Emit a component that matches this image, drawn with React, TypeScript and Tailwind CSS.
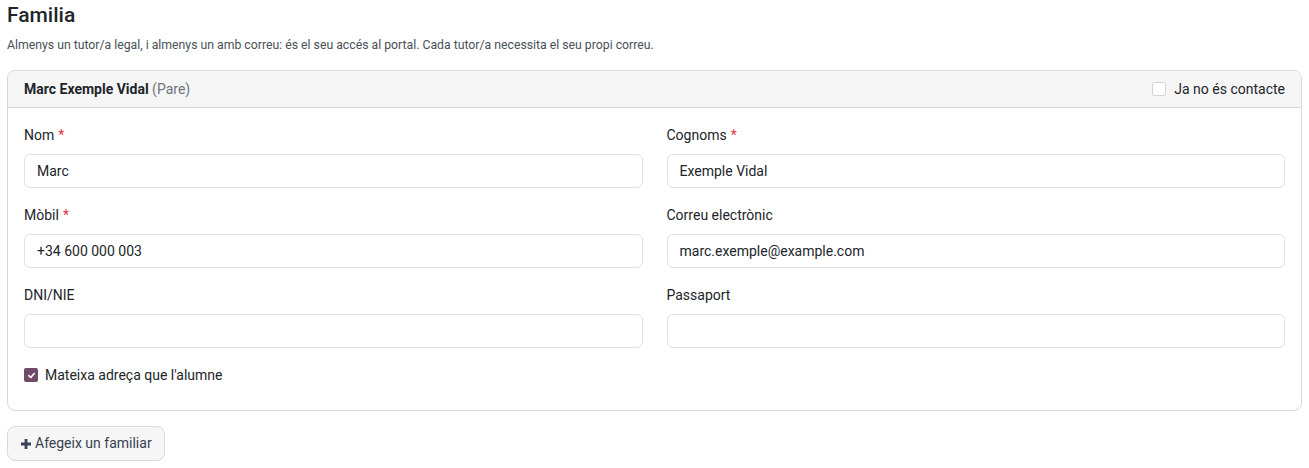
import React from "react";

type Field = { label: string; required?: boolean; value: string };

const rows: Field[][] = [
  [
    { label: "Nom", required: true, value: "Marc" },
    { label: "Cognoms", required: true, value: "Exemple Vidal" },
  ],
  [
    { label: "Mòbil", required: true, value: "+34 600 000 003" },
    { label: "Correu electrònic", value: "marc.exemple@example.com" },
  ],
  [
    { label: "DNI/NIE", value: "" },
    { label: "Passaport", value: "" },
  ],
];

function FieldBox({ f }: { f: Field }) {
  return (
    <div className="flex flex-col">
      <label className="text-[14px] leading-[20px] text-[#212529] mb-[9px]">
        {f.label}
        {f.required && <span className="text-[#dc3545] ml-[4px]">*</span>}
      </label>
      <input
        readOnly
        value={f.value}
        className="h-[34px] w-full rounded-[6px] border border-[#dee2e6] bg-white px-[12px] text-[14px] text-[#212529] outline-none"
      />
    </div>
  );
}

export default function App() {
  return (
    <div className="bg-white px-[7px] pt-[2px] pb-[6px] font-['Roboto',sans-serif] text-[#212529]">
      <h2 className="text-[21px] leading-[27px] font-medium">Familia</h2>
      <p className="mt-[8px] text-[12.25px] leading-[16px] text-[#495057]">
        Almenys un tutor/a legal, i almenys un amb correu: és el seu accés al portal. Cada tutor/a necessita el seu propi correu.
      </p>

      <div className="mt-[17px] rounded-[8px] border border-[#d8dadd]">
        <div className="flex h-[37px] items-center justify-between rounded-t-[8px] border-b border-[#d8dadd] bg-[#f6f6f6] px-[16px]">
          <div className="text-[14px]">
            <span className="font-bold text-[#212529]">Marc Exemple Vidal</span>{" "}
            <span className="text-[#6c757d]">(Pare)</span>
          </div>
          <label className="flex items-center gap-[8px] text-[14px]">
            <span className="h-[14px] w-[14px] rounded-[2px] border border-[#d0d3d7] bg-white" />
            Ja no és contacte
          </label>
        </div>

        <div className="px-[16px] pt-[17px] pb-[27px]">
          <div className="flex flex-col gap-[17px]">
            {rows.map((r, i) => (
              <div key={i} className="grid grid-cols-2 gap-x-[24px]">
                {r.map((f) => (
                  <FieldBox key={f.label} f={f} />
                ))}
              </div>
            ))}
          </div>
          <label className="mt-[19px] flex items-center gap-[7px] text-[14px] leading-[16px]">
            <span className="flex h-[14px] w-[14px] items-center justify-center rounded-[2px] bg-[#714b67]">
              <svg width="9" height="9" viewBox="0 0 10 10">
                <path d="M2 5.2 L4.2 7.2 L8 2.8" fill="none" stroke="white" strokeWidth="1.8" strokeLinecap="round" strokeLinejoin="round" />
              </svg>
            </span>
            Mateixa adreça que l'alumne
          </label>
        </div>
      </div>

      <button className="mt-[15px] flex h-[35px] items-center gap-[3px] rounded-[8px] border border-[#d8dadd] bg-[#f6f6f6] px-[12px] text-[14px] text-[#374151]">
        <svg width="12" height="12" viewBox="0 0 12 12">
          <path d="M6 1 V11 M1 6 H11" stroke="#374151" strokeWidth="2.8" />
        </svg>
        Afegeix un familiar
      </button>
    </div>
  );
}
